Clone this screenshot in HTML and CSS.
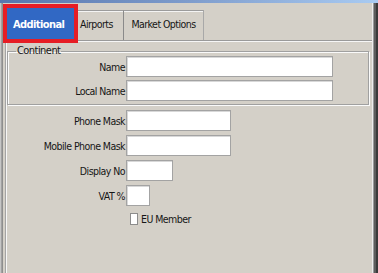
FILE: index.html
```html
<!DOCTYPE html>
<html lang="en">
<head>
  <meta charset="UTF-8">
  <title>Continent settings</title>
  <link rel="stylesheet" href="styles.css">
</head>
<body>
  <div class="window">
    <div class="titlebar"></div>

    <!-- Tabs -->
    <div class="tabstrip">
      <div class="tab active">Additional</div>
      <div class="tab airports">Airports</div>
      <div class="tab market">Market Options</div>
    </div>

    <!-- Tab page -->
    <div class="panel">
      <fieldset class="group">
        <legend>Continent</legend>
        <div class="row">
          <label>Name</label>
          <input type="text" class="wide">
        </div>
        <div class="row">
          <label>Local Name</label>
          <input type="text" class="wide">
        </div>
      </fieldset>

      <div class="fields">
        <div class="row">
          <label>Phone Mask</label>
          <input type="text" class="mid">
        </div>
        <div class="row">
          <label>Mobile Phone Mask</label>
          <input type="text" class="mid">
        </div>
        <div class="row">
          <label>Display No</label>
          <input type="text" class="short">
        </div>
        <div class="row">
          <label>VAT %</label>
          <input type="text" class="tiny">
        </div>
        <div class="row check-row">
          <span></span>
          <label class="check"><input type="checkbox"> EU Member</label>
        </div>
      </div>
    </div>
  </div>
</body>
</html>
```

FILE: styles.css
```css
body {
  margin: 0;
  padding: 0;
  width: 378px;
  height: 273px;
  overflow: hidden;
  background: #d4d0c8;
  font-family: 'DejaVu Sans Condensed', 'DejaVu Sans', sans-serif;
  font-stretch: condensed;
  font-size: 10.5px;
  letter-spacing: -0.55px;
  color: #161616;
}

.window {
  height: 273px;
  display: flex;
  flex-direction: column;
  box-shadow:
    inset 1px 0 #c6c6c6,
    inset 2px 0 #a2a2a2,
    inset 3px 0 #8e8e8e,
    inset -2px 0 #3a3a3a,
    inset -4px 0 #5c5c5c,
    inset -5px 0 #9a9a9a,
    inset -6px 0 #ececec;
}

.titlebar {
  height: 3px;
  background: linear-gradient(to right, #5676ae, #7e9ccc 50%, #a9cbf2);
}

/* Tabs */
.tabstrip {
  height: 37px;
  display: flex;
  align-items: flex-end;
  padding-left: 3px;
}

.tab {
  box-sizing: border-box;
  height: 30px;
  line-height: 27px;
  text-align: center;
  border-top: 1px solid #9c9c9c;
  border-right: 1px solid #8a8a8a;
  box-shadow: inset 0 1px #f4f4f4;
}

.tab.active {
  position: relative;
  z-index: 1;
  width: 75px;
  height: 39px;
  margin-bottom: -3px;
  border: 4px solid #e61d25;
  box-shadow: none;
  background: #3168c4;
  color: #fff;
  font-size: 11px;
  font-weight: 600;
  letter-spacing: -0.6px;
  line-height: 33px;
  text-align: left;
  padding-left: 6px;
}

.tab.airports {
  width: 46px;
  text-align: left;
  padding-left: 2px;
}

.tab.market {
  width: 80px;
  border-right-color: #a8a8a8;
}

/* Tab page */
.panel {
  flex: 1;
  margin: 0 6px 0 5px;
  border-top: 1px solid #9a9a9a;
  border-left: 1px solid #a4a4a4;
  box-shadow: inset 1px 1px #f6f6f6;
}

.group {
  margin: 5px 3px 0 1px;
  padding: 0 0 3px 0;
  border: 1px solid #a0a0a0;
  box-shadow: inset 1px 1px #fafafa, 1px 1px #fafafa;
}

.group legend {
  margin-left: 8px;
  padding: 0 1px;
  line-height: 10px;
  font-size: 11px;
}

.row {
  display: grid;
  grid-template-columns: 117px auto;
  column-gap: 1px;
  align-items: center;
  height: 21px;
}

.group .row + .row {
  margin-top: 3px;
}

.row label {
  text-align: right;
  white-space: nowrap;
}

.fields {
  margin-top: 5px;
}

.fields .row {
  grid-template-columns: 119px auto;
  margin-bottom: 4px;
}

input[type="text"] {
  box-sizing: border-box;
  height: 21px;
  margin: 0;
  border: 1px solid #a3a3a3;
  box-shadow: inset 1px 1px #d8d8d8;
  background: #fff;
  outline: none;
}

.wide { width: 207px; }
.mid { width: 105px; }
.short { width: 47px; }
.tiny { width: 24px; }

.fields .check-row {
  margin-top: 6px;
  height: 14px;
}

.row label.check {
  display: flex;
  align-items: center;
  gap: 3px;
  text-align: left;
  padding-left: 4px;
}

input[type="checkbox"] {
  appearance: none;
  box-sizing: border-box;
  width: 8px;
  height: 12px;
  margin: 0;
  border: 1px solid #8c8c8c;
  background: #fff;
}
```
